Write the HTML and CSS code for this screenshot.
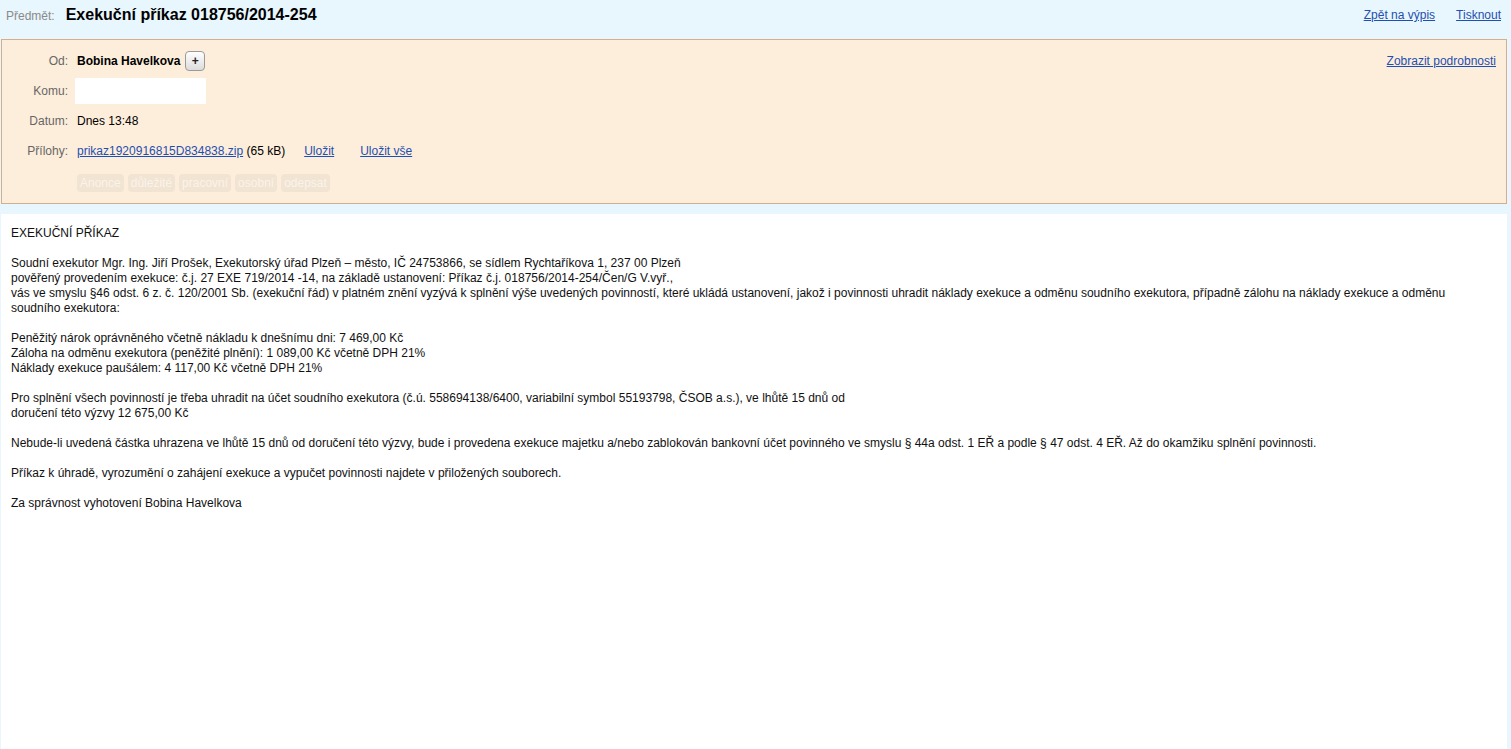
FILE: index.html
```html
<!DOCTYPE html>
<html lang="cs">
<head>
<meta charset="utf-8">
<title>Exekuční příkaz</title>
<link rel="stylesheet" href="styles.css">
</head>
<body>
<div class="page">
  <div class="topbar">
    <div class="subject">
      <span class="subject-label">Předmět:</span>
      <h1 class="subject-title">Exekuční příkaz 018756/2014-254</h1>
    </div>
    <div class="top-links">
      <a href="#">Zpět na výpis</a>
      <a href="#">Tisknout</a>
    </div>
  </div>

  <div class="meta">
    <div class="meta-grid">
      <div class="label">Od:</div>
      <div class="value from"><strong>Bobina Havelkova</strong><span class="plus">+</span></div>
      <div class="label">Komu:</div>
      <div class="value"><span class="to-box"></span></div>
      <div class="label">Datum:</div>
      <div class="value">Dnes 13:48</div>
      <div class="label">Přílohy:</div>
      <div class="value attach"><a href="#">prikaz1920916815D834838.zip</a>&nbsp;(65 kB) <a href="#" class="save">Uložit</a><a href="#" class="save-all">Uložit vše</a></div>
      <div class="label"></div>
      <div class="value tags">
        <span class="tag">Anonce</span><span class="tag">důležité</span><span class="tag">pracovní</span><span class="tag">osobní</span><span class="tag">odepsat</span>
      </div>
    </div>
    <a href="#" class="details">Zobrazit podrobnosti</a>
  </div>

  <div class="message">
EXEKUČNÍ PŘÍKAZ<br>
<br>
Soudní exekutor Mgr. Ing. Jiří Prošek, Exekutorský úřad Plzeň – město, IČ 24753866, se sídlem Rychtaříkova 1, 237 00 Plzeň<br>
pověřený provedením exekuce: č.j. 27 EXE 719/2014 -14, na základě ustanovení: Příkaz č.j. 018756/2014-254/Čen/G V.vyř.,<br>
vás ve smyslu §46 odst. 6 z. č. 120/2001 Sb. (exekuční řád) v platném znění vyzývá k splnění výše uvedených povinností, které ukládá ustanovení, jakož i povinnosti uhradit náklady exekuce a odměnu soudního exekutora, případně zálohu na náklady exekuce a odměnu soudního exekutora:<br>
<br>
Peněžitý nárok oprávněného včetně nákladu k dnešnímu dni: 7 469,00 Kč<br>
Záloha na odměnu exekutora (peněžité plnění): 1 089,00 Kč včetně DPH 21%<br>
Náklady exekuce paušálem: 4 117,00 Kč včetně DPH 21%<br>
<br>
Pro splnění všech povinností je třeba uhradit na účet soudního exekutora (č.ú. 558694138/6400, variabilní symbol 55193798, ČSOB a.s.), ve lhůtě 15 dnů od<br>
doručení této výzvy 12 675,00 Kč<br>
<br>
Nebude-li uvedená částka uhrazena ve lhůtě 15 dnů od doručení této výzvy, bude i provedena exekuce majetku a/nebo zablokován bankovní účet povinného ve smyslu § 44a odst. 1 EŘ a podle § 47 odst. 4 EŘ. Až do okamžiku splnění povinnosti.<br>
<br>
Příkaz k úhradě, vyrozumění o zahájení exekuce a vypučet povinnosti najdete v přiložených souborech.<br>
<br>
Za správnost vyhotovení Bobina Havelkova
  </div>
</div>
</body>
</html>
```

FILE: styles.css
```css
html, body {
  margin: 0;
  padding: 0;
  height: 100%;
}
body {
  background: #e8f6fd;
  font-family: "Liberation Sans", Arial, sans-serif;
  font-size: 12px;
  color: #000;
}
.page {
  display: flex;
  flex-direction: column;
  height: 100%;
  padding: 0 4px 0 1px;
  box-sizing: border-box;
}
a {
  color: #1f4fb0;
  text-decoration: underline;
}
.topbar {
  display: flex;
  justify-content: space-between;
  align-items: flex-start;
  height: 39px;
  padding: 5px 6px 0 5px;
  box-sizing: border-box;
}
.subject {
  display: flex;
  align-items: baseline;
  gap: 11px;
}
.subject-label {
  color: #8a8a8a;
  font-size: 12px;
}
.subject-title {
  margin: 0;
  font-size: 16px;
  font-weight: bold;
  line-height: 20px;
}
.top-links {
  display: flex;
  gap: 21px;
  padding-top: 3px;
}
.meta {
  display: flex;
  justify-content: space-between;
  background: #fdeedb;
  border: 1px solid #d7ae8b;
  height: 165px;
  box-sizing: border-box;
  padding: 6px 10px 0 0;
}
.meta-grid {
  display: grid;
  grid-template-columns: 66px auto;
  grid-auto-rows: 30px;
  column-gap: 9px;
  align-items: center;
  align-content: start;
}
.label {
  color: #666;
  text-align: right;
}
.value {
  display: flex;
  align-items: center;
}
.from strong {
  font-weight: bold;
}
.plus {
  display: inline-flex;
  align-items: center;
  justify-content: center;
  width: 18px;
  height: 18px;
  margin-left: 5px;
  border: 1px solid #9a9a9a;
  border-radius: 4px;
  background: linear-gradient(#ffffff, #dcdcdc);
  font-weight: bold;
  font-size: 12px;
  line-height: 1;
  color: #222;
}
.to-box {
  display: block;
  width: 131px;
  height: 26px;
  margin-left: -2px;
  background: #fff;
}
.attach .save {
  margin-left: 19px;
}
.attach .save-all {
  margin-left: 26px;
}
.tags {
  gap: 4px;
  margin-top: 3px;
}
.tag {
  display: inline-block;
  padding: 2px 3px;
  border-radius: 4px;
  background: #f1e4d3;
  color: #fbf3ea;
  line-height: 14px;
}
.details {
  margin-top: 8px;
  align-self: flex-start;
}
.message {
  flex: 1;
  background: #fff;
  margin-top: 10px;
  padding: 12px 10px 10px;
  line-height: 15px;
  color: #111;
}
```
